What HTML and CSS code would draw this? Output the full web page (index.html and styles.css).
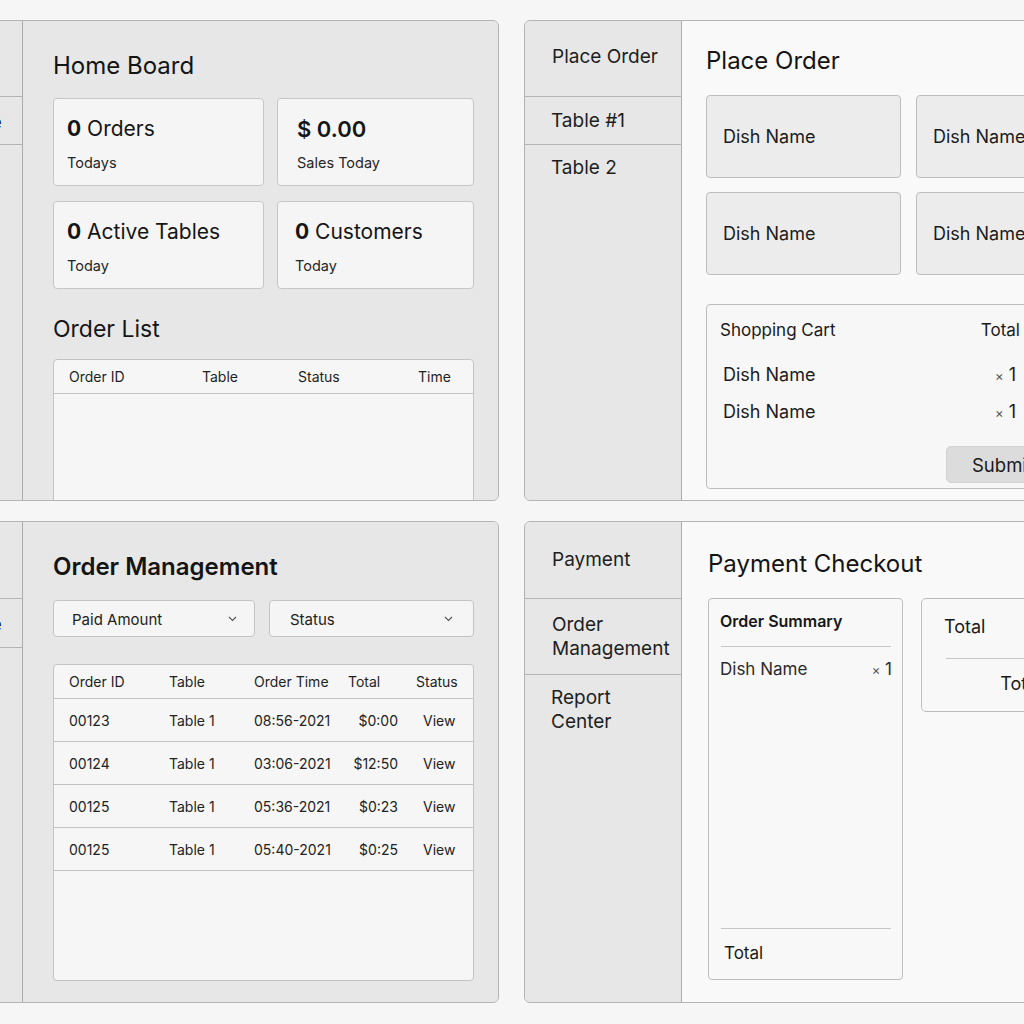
FILE: index.html
```html
<!DOCTYPE html>
<html lang="en">
<head>
<meta charset="utf-8">
<title>Restaurant POS Wireframes</title>
<link rel="stylesheet" href="styles.css">
</head>
<body>
<div class="board">

  <!-- Home Board -->
  <section class="panel">
    <aside class="side">
      <div class="side-item first-top">Home</div>
      <div class="side-item second-top clipped">Order Queue</div>
      <div class="side-item rest">Tables</div>
    </aside>
    <div class="main grey home">
      <h1 class="title">Home Board</h1>
      <div class="stats">
        <div class="stat">
          <div class="stat-value"><b>0</b> Orders</div>
          <div class="stat-label">Todays</div>
        </div>
        <div class="stat right">
          <div class="stat-value money">$ 0.00</div>
          <div class="stat-label">Sales Today</div>
        </div>
        <div class="stat">
          <div class="stat-value"><b>0</b> Active Tables</div>
          <div class="stat-label">Today</div>
        </div>
        <div class="stat right alt">
          <div class="stat-value"><b>0</b> Customers</div>
          <div class="stat-label">Today</div>
        </div>
      </div>
      <h2 class="subtitle">Order List</h2>
      <div class="table list-table">
        <div class="thead">
          <span>Order ID</span><span>Table</span><span>Status</span><span>Time</span>
        </div>
      </div>
    </div>
  </section>

  <!-- Place Order -->
  <section class="panel">
    <aside class="side">
      <div class="side-item first-top">Place Order</div>
      <div class="side-item second-top">Table #1</div>
      <div class="side-item rest">Table 2</div>
    </aside>
    <div class="main light order">
      <h1 class="title">Place Order</h1>
      <div class="dishes">
        <div class="dish">Dish Name</div>
        <div class="dish">Dish Name</div>
        <div class="dish">Dish Name</div>
        <div class="dish">Dish Name</div>
      </div>
      <div class="cart">
        <div class="cart-row cart-head"><span>Shopping Cart</span><span class="qty">Total</span></div>
        <div class="cart-row item"><span>Dish Name</span><span class="qty"><small>×</small> 1</span></div>
        <div class="cart-row item"><span>Dish Name</span><span class="qty"><small>×</small> 1</span></div>
        <button class="submit">Submit</button>
      </div>
    </div>
  </section>

  <!-- Order Management -->
  <section class="panel">
    <aside class="side">
      <div class="side-item first-bottom">Home</div>
      <div class="side-item second-bottom-left clipped">Order Queue</div>
      <div class="side-item rest">Reports</div>
    </aside>
    <div class="main grey manage">
      <h1 class="title strong">Order Management</h1>
      <div class="filters">
        <div class="select one">
          <span>Paid Amount</span>
          <svg width="9" height="6" viewBox="0 0 9 6"><path d="M1 1l3.5 3.5L8 1" stroke="#555" stroke-width="1.1" fill="none"/></svg>
        </div>
        <div class="select two">
          <span>Status</span>
          <svg width="9" height="6" viewBox="0 0 9 6"><path d="M1 1l3.5 3.5L8 1" stroke="#555" stroke-width="1.1" fill="none"/></svg>
        </div>
      </div>
      <div class="table orders-table">
        <div class="thead orow">
          <span>Order ID</span><span>Table</span><span>Order Time</span><span>Total</span><span>Status</span>
        </div>
        <div class="orow trow"><span>00123</span><span>Table 1</span><span>08:56-2021</span><span class="amt">$0:00</span><span class="view">View</span></div>
        <div class="orow trow"><span>00124</span><span>Table 1</span><span>03:06-2021</span><span class="amt">$12:50</span><span class="view">View</span></div>
        <div class="orow trow"><span>00125</span><span>Table 1</span><span>05:36-2021</span><span class="amt">$0:23</span><span class="view">View</span></div>
        <div class="orow trow"><span>00125</span><span>Table 1</span><span>05:40-2021</span><span class="amt">$0:25</span><span class="view">View</span></div>
      </div>
    </div>
  </section>

  <!-- Payment Checkout -->
  <section class="panel">
    <aside class="side">
      <div class="side-item first-bottom">Payment</div>
      <div class="side-item second-bottom">Order<br>Management</div>
      <div class="side-item rest">Report<br>Center</div>
    </aside>
    <div class="main light pay">
      <h1 class="title">Payment Checkout</h1>
      <div class="pay-grid">
        <div class="summary">
          <div class="summary-head">Order Summary</div>
          <hr class="rule">
          <div class="summary-row"><span>Dish Name</span><span class="qty"><small>×</small> 1</span></div>
          <div class="spacer"></div>
          <hr class="rule">
          <div class="summary-total">Total</div>
        </div>
        <div class="total-box">
          <div class="total-label">Total</div>
          <hr class="rule wide">
          <div class="total-value">Total</div>
        </div>
      </div>
    </div>
  </section>

</div>
</body>
</html>
```

FILE: styles.css
```css
* { box-sizing: border-box; }

html, body {
  margin: 0;
  padding: 0;
  background: #f6f6f6;
  overflow: hidden;
  width: 1024px;
  height: 1024px;
}

body {
  font-family: Inter, "Noto Sans", "Liberation Sans", sans-serif;
  color: #1c1c1c;
}

.board {
  display: grid;
  grid-template-columns: 634px 634px;
  grid-template-rows: 481px 482px;
  column-gap: 25px;
  row-gap: 20px;
  margin-left: -135px;
  padding-top: 20px;
}

.panel {
  display: grid;
  grid-template-columns: 157px 1fr;
  border: 1px solid #b4b4b4;
  border-radius: 6px;
  overflow: hidden;
  background: #e7e7e7;
}

/* sidebar */
.side {
  background: #e7e7e7;
  border-right: 1px solid #ababab;
  display: flex;
  flex-direction: column;
}
.side-item {
  padding-left: 27px;
  font-size: 19px;
  line-height: 24px;
  color: #1e1e1e;
  display: flex;
  align-items: center;
  white-space: nowrap;
}
.side-item.clipped { padding-left: 20px; padding-top: 4px; }
.first-top { height: 76px; border-bottom: 1px solid #b4b4b4; padding-bottom: 3px; }
.second-top { height: 48px; border-bottom: 1px solid #b4b4b4; padding-left: 26px; }
.first-bottom { height: 77px; border-bottom: 1px solid #b4b4b4; }
.second-bottom { height: 76px; border-bottom: 1px solid #b4b4b4; }
.second-bottom-left { height: 49px; border-bottom: 1px solid #b4b4b4; }
.rest { align-items: flex-start; padding-top: 11px; padding-left: 26px; }

/* main areas */
.main { overflow: hidden; }
.main.grey { background: #e7e7e7; }
.main.light { background: #f9f9f9; }

.title {
  margin: 0;
  font-size: 24px;
  line-height: 30px;
  font-weight: 400;
  color: #141414;
}
.title.strong { font-weight: 600; }

/* Home board */
.home { padding: 30px 0 0 30px; }
.stats {
  margin-top: 17px;
  display: grid;
  grid-template-columns: 211px 197px;
  grid-auto-rows: 88px;
  column-gap: 13px;
  row-gap: 15px;
}
.stat {
  background: #f5f5f5;
  border: 1px solid #c6c6c6;
  border-radius: 4px;
  padding: 18px 0 0 13px;
}
.stat.right { padding-left: 19px; }
.stat.right.alt { padding-left: 17px; }
.stat-value {
  font-size: 21px;
  line-height: 24px;
  color: #151515;
}
.stat-value b { font-weight: 700; }
.stat-value.money { font-weight: 600; font-size: 22px; }
.stat-label {
  margin-top: 13px;
  font-size: 14.5px;
  line-height: 18px;
  color: #262626;
}
.subtitle {
  margin: 26px 0 0 0;
  font-size: 23px;
  line-height: 28px;
  font-weight: 400;
  color: #161616;
}

.table {
  background: #f6f6f6;
  border: 1px solid #c3c3c3;
  border-radius: 4px;
}
.list-table {
  margin-top: 16px;
  width: 421px;
  height: 200px;
}
.thead {
  height: 34px;
  border-bottom: 1px solid #c4c4c4;
  font-size: 14px;
  color: #1f1f1f;
  display: grid;
  align-items: center;
}
.list-table .thead {
  grid-template-columns: 133px 96px 120px 1fr;
  padding-left: 15px;
}

/* Place order */
.order { padding: 25px 0 0 24px; }
.dishes {
  margin-top: 19px;
  display: grid;
  grid-template-columns: 195px 195px;
  grid-auto-rows: 83px;
  column-gap: 15px;
  row-gap: 14px;
}
.dish {
  background: #ececec;
  border: 1px solid #bdbdbd;
  border-radius: 4px;
  font-size: 18px;
  color: #1b1b1b;
  display: flex;
  align-items: center;
  padding-left: 16px;
}
.cart {
  margin-top: 29px;
  width: 430px;
  height: 185px;
  background: #f7f7f7;
  border: 1px solid #bdbdbd;
  border-radius: 4px;
  padding: 13px 0 0 13px;
}
.cart-row {
  display: grid;
  grid-template-columns: 256px 44px;
}
.cart-row .qty { text-align: right; }
.cart-head {
  font-size: 17px;
  line-height: 24px;
  color: #1a1a1a;
}
.cart-row.item {
  font-size: 18px;
  line-height: 36px;
  padding-left: 3px;
  grid-template-columns: 253px 44px;
}
.cart-head + .item { margin-top: 15px; }
.cart-row.item .qty { padding-right: 4px; }
small { font-size: 13px; color: #555; }
.submit {
  display: block;
  margin: 15px 0 0 226px;
  width: 110px;
  height: 37px;
  background: #dcdcdc;
  border: 1px solid #d2d2d2;
  border-radius: 5px;
  font-family: inherit;
  font-size: 18.5px;
  color: #1a1a1a;
  text-align: left;
  padding: 0 0 0 25px;
}

/* Order management */
.manage { padding: 30px 0 0 30px; }
.filters {
  margin-top: 18px;
  display: flex;
  gap: 14px;
}
.select {
  height: 37px;
  background: #f5f5f5;
  border: 1px solid #c4c4c4;
  border-radius: 4px;
  display: flex;
  align-items: center;
  justify-content: space-between;
  font-size: 15px;
  color: #222;
  padding-top: 2px;
}
.select svg { margin-top: -2px; }
.select.one { width: 202px; padding-left: 18px; padding-right: 17px; }
.select.two { width: 205px; padding-left: 20px; padding-right: 20px; }
.orders-table {
  margin-top: 27px;
  width: 421px;
  height: 317px;
}
.orow {
  display: grid;
  grid-template-columns: 100px 85px 94px 50px 1fr;
  padding-left: 15px;
  align-items: center;
  font-size: 14px;
}
.orow span:nth-child(5) { padding-left: 18px; }
.trow {
  height: 43px;
  border-bottom: 1px solid #c2c2c2;
  color: #222;
}
.trow .amt { text-align: right; }
.trow .view { padding-left: 25px !important; }

/* Payment */
.pay { padding: 27px 0 0 26px; }
.pay-grid {
  margin-top: 19px;
  display: flex;
  align-items: flex-start;
  gap: 18px;
}
.summary {
  width: 195px;
  height: 382px;
  background: #f8f8f8;
  border: 1px solid #bdbdbd;
  border-radius: 4px;
  display: flex;
  flex-direction: column;
  padding: 11px 0 14px 0;
}
.summary-head {
  padding-left: 11px;
  font-size: 16px;
  line-height: 22px;
  font-weight: 600;
  color: #161616;
}
.rule {
  border: 0;
  border-top: 1px solid #c6c6c6;
  margin: 14px 11px 0 12px;
  height: 0;
}
.summary-row {
  margin-top: 10px;
  padding: 0 10px 0 11px;
  display: flex;
  justify-content: space-between;
  font-size: 17px;
  line-height: 24px;
  color: #2a2a2a;
}
.spacer { flex: 1; }
.summary-total {
  margin-top: 12px;
  padding-left: 15px;
  font-size: 17px;
  line-height: 24px;
  color: #1a1a1a;
}
.total-box {
  width: 200px;
  height: 114px;
  background: #f8f8f8;
  border: 1px solid #bdbdbd;
  border-radius: 5px;
  padding: 16px 0 0 0;
}
.total-label {
  padding-left: 22px;
  font-size: 18px;
  line-height: 24px;
  color: #1a1a1a;
}
.rule.wide { margin: 19px 0 0 24px; }
.total-value {
  margin-top: 13px;
  font-size: 18px;
  line-height: 24px;
  text-align: center;
  color: #1a1a1a;
}
```
